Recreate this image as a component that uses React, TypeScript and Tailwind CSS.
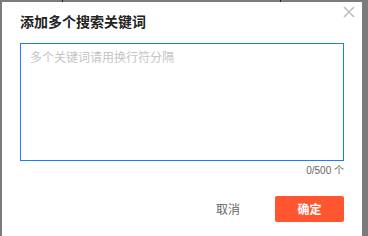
import React, { useState } from 'react';

export default function App() {
  const [text, setText] = useState('');

  return (
    <div
      className="relative w-[368px] h-[236px] overflow-hidden bg-[#7b7b7b]"
      style={{ fontFamily: '"Noto Sans CJK SC", "Liberation Sans", sans-serif' }}
    >
      {/* backdrop page lines */}
      <div className="absolute left-[62px] top-0 w-px h-[2px] bg-[#222]" />
      <div className="absolute left-[280px] top-0 w-px h-[2px] bg-[#222]" />

      {/* Dialog */}
      <div className="absolute left-[2px] top-[2px] w-[360px] h-[240px] bg-white flex flex-col">
        <div className="flex items-start justify-between pl-[18px] pr-[6px] pt-[8px]">
          <h2 className="text-[14px] leading-[20px] font-bold text-[#222] pt-[1px]">添加多个搜索关键词</h2>
          <button className="text-[#bdbdbd] mt-[-5px]" aria-label="关闭">
            <svg width="14" height="14" viewBox="0 0 14 14" fill="none" stroke="currentColor" strokeWidth="1.6">
              <path d="M2 2 L12 12 M12 2 L2 12" />
            </svg>
          </button>
        </div>

        <div className="px-[18px] mt-[12px]">
          <textarea
            value={text}
            onChange={(e) => setText(e.target.value.slice(0, 500))}
            placeholder="多个关键词请用换行符分隔"
            className="block w-[324px] h-[118px] resize-none border border-[#1a7ff5] outline-none px-[9px] py-[4px] text-[12px] leading-[18px] text-[#333] placeholder:text-[#c4c4c4] caret-[#333]"
          />
          <div
            className="text-right text-[10px] leading-[14px] text-[#666] mt-[3px] w-[324px]"
            style={{ fontFamily: '"Liberation Sans", "Noto Sans CJK SC", sans-serif' }}
          >
            {text.length}/500 个
          </div>
        </div>

        <div className="flex justify-end items-center gap-[35px] px-[18px] mt-[18px]">
          <button className="text-[12px] text-[#666]">取消</button>
          <button className="w-[69px] h-[26px] rounded-[2px] bg-[#ff5530] text-white text-[12px] font-bold">确定</button>
        </div>
      </div>
    </div>
  );
}
